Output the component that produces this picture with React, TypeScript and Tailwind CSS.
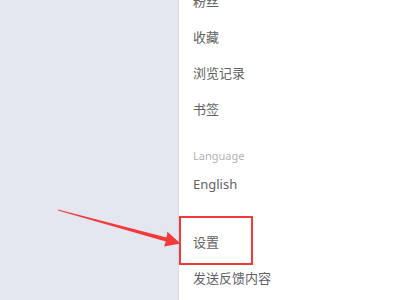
import React from 'react';

const menuTop = ['粉丝', '收藏', '浏览记录', '书签'];

export default function App() {
    return (
        <div
            className="relative w-[400px] h-[300px] overflow-hidden flex bg-[#e4e7ef]"
            style={{ fontFamily: '"Noto Sans", "Noto Sans CJK SC", sans-serif' }}
        >
            <div className="w-[178px] shrink-0" />
            <div className="flex-1 bg-white border-l border-[#dadde6] flex flex-col pl-[14px]">
                <div className="flex flex-col mt-[-16px]">
                    {menuTop.map(label => (
                        <div key={label} className="h-[36px] flex items-center text-[13px] text-[#626262]">
                            {label}
                        </div>
                    ))}
                </div>
                <div className="h-[17px]" />
                <div className="h-[22px] flex items-center text-[11px] text-[#b4b4b4]">Language</div>
                <div className="h-[36px] flex items-center text-[13px] text-[#626262]">English</div>
                <div className="h-[22px]" />
                <div className="h-[36px] flex items-center text-[13px] text-[#626262]">设置</div>
                <div className="h-[36px] flex items-center text-[13px] text-[#626262]">发送反馈内容</div>
            </div>

            {/* annotation: highlight box */}
            <div className="absolute left-[179px] top-[216px] w-[74px] h-[49px] border-2 border-[#f23a3a]" />

            {/* annotation: arrow */}
            <svg className="absolute left-0 top-0" width="400" height="300" viewBox="0 0 400 300">
                <polygon
                    points="58,209.4 166.6,237.4 167.4,231.8 180.5,243.5 164.2,246.6 165.8,241.4 58,210.6"
                    fill="#f23a3a"
                />
            </svg>
        </div>
    );
}
